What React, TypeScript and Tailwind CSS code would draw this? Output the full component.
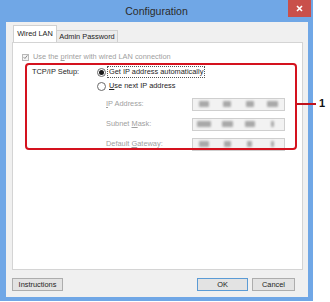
import React from "react";

const F = "font-['Liberation_Sans',Arial,sans-serif]";

function Blob({ w }: { w: number }) {
  return (
    <div className="flex-1 flex items-center justify-center">
      <div
        className="h-[6px] bg-[#a9a9a9] blur-[1.2px] rounded-[1px]"
        style={{ width: `${w}px` }}
      />
    </div>
  );
}

function IpBox({ widths }: { widths: number[] }) {
  return (
    <div className="w-[93px] h-[13px] border border-[#cfcfcf] bg-[#f2f2f2] flex">
      {widths.map((w, i) => (
        <Blob key={i} w={w} />
      ))}
    </div>
  );
}

function FieldRow({ label, widths }: { label: React.ReactNode; widths: number[] }) {
  return (
    <div className="h-[20px] flex items-center">
      <div className="w-[95px] pl-[9px] text-[#a0a0a0]">{label}</div>
      <IpBox widths={widths} />
    </div>
  );
}

function Radio({ checked }: { checked?: boolean }) {
  return (
    <div className="w-[9px] h-[9px] rounded-full border border-[#6a6a6a] bg-white flex items-center justify-center">
      {checked && <div className="w-[5px] h-[5px] rounded-full bg-[#1a1a1a]" />}
    </div>
  );
}

function Button({ children, def, w }: { children: React.ReactNode; def?: boolean; w: number }) {
  return (
    <div
      className={`h-[13px] flex items-center justify-center bg-[#e3e3e3] text-[#222] border ${
        def ? "border-[#5b9bd5]" : "border-[#adadad]"
      }`}
      style={{ width: `${w}px` }}
    >
      {children}
    </div>
  );
}

export default function App() {
  return (
    <div className={`w-[330px] h-[302px] bg-white relative overflow-hidden ${F} text-[7.4px] leading-none`}>
      <div className="w-[313px] h-[301px] bg-[#70a7e6] flex flex-col">
        {/* Title bar */}
        <div className="h-[22px] relative flex items-center justify-center">
          <span className="text-[10.5px] text-[#2b2b2b] pt-[1px]">Configuration</span>
          <div className="absolute right-[2px] top-0 w-[23px] h-[17px] bg-[#c9504b] flex items-center justify-center">
            <svg width="7" height="7" viewBox="0 0 7 7">
              <path d="M1 1 L6 6 M6 1 L1 6" stroke="#fff" strokeWidth="1.6" />
            </svg>
          </div>
        </div>
        {/* Client */}
        <div className="flex-1 ml-[6px] mr-[5px] mb-[4px] bg-[#f0f0f0] flex flex-col pt-[4px] pl-[6px] pr-[5px]">
          {/* Tabs */}
          <div className="flex items-end h-[16px] ml-[1px] relative z-10">
            <div className="w-[44px] h-[17px] bg-white border border-[#d0d0d0] border-b-0 flex items-center justify-center text-[#222] pb-[1px]">
              Wired LAN
            </div>
            <div className="w-[61px] h-[12px] bg-[#ececec] border border-[#d0d0d0] border-l-0 border-b-0 flex items-center justify-center text-[#222]">
              Admin Password
            </div>
          </div>
          {/* Panel */}
          <div className="h-[228px] bg-white border border-[#d4d4d4] flex flex-col">
            <div className="h-[12px] mt-[8px] pl-[9px] flex items-center gap-[4px]">
              <div className="w-[7px] h-[7px] border border-[#b9b9b9] bg-[#f4f4f4] flex items-center justify-center">
                <svg width="6" height="6" viewBox="0 0 6 6">
                  <path d="M0.8 3.2 L2.3 4.8 L5.3 1" stroke="#8c8c8c" strokeWidth="1.2" fill="none" />
                </svg>
              </div>
              <span className="text-[#a0a0a0]">
                Use the <span className="underline">p</span>rinter with wired LAN connection
              </span>
            </div>
            <div className="flex pl-[19px] mt-[2px]">
              <div className="w-[65px] h-[14px] flex items-center text-[#1e1e1e]">TCP/IP Setup:</div>
              <div className="flex flex-col">
                <div className="h-[14px] flex items-center">
                  <Radio checked />
                  <span className="ml-[1px] px-[1px] py-[1px] border border-dotted border-[#555] text-[#1e1e1e]">
                    Get IP address automatically
                  </span>
                </div>
                <div className="h-[14px] flex items-center">
                  <Radio />
                  <span className="ml-[3px] text-[#1e1e1e]">
                    <span className="underline">U</span>se next IP address
                  </span>
                </div>
                <div className="mt-[1px]">
                  <FieldRow
                    label={<><span className="underline">I</span>P Address:</>}
                    widths={[10, 8, 8, 11]}
                  />
                  <FieldRow
                    label={<>Subnet <span className="underline">M</span>ask:</>}
                    widths={[14, 11, 10, 3]}
                  />
                  <FieldRow
                    label={<>Default <span className="underline">G</span>ateway:</>}
                    widths={[10, 7, 5, 3]}
                  />
                </div>
              </div>
            </div>
          </div>
          {/* Buttons */}
          <div className="flex mt-[8px]">
            <Button w={51}>Instructions</Button>
            <div className="flex-1" />
            <div className="flex gap-[4px] mr-[8px]">
              <Button w={51} def>
                OK
              </Button>
              <Button w={43}>Cancel</Button>
            </div>
          </div>
        </div>
      </div>
      {/* Annotation overlay */}
      <div className="absolute left-[25px] top-[63px] w-[272px] h-[87px] border-2 border-[#d4121e] rounded-[4px] pointer-events-none" />
      <div className="absolute left-[297px] top-[103px] w-[19px] h-[2px] bg-[#c0121c]" />
      <div className="absolute left-[319px] top-[98px] text-[11px] font-bold text-[#111]">1</div>
    </div>
  );
}
